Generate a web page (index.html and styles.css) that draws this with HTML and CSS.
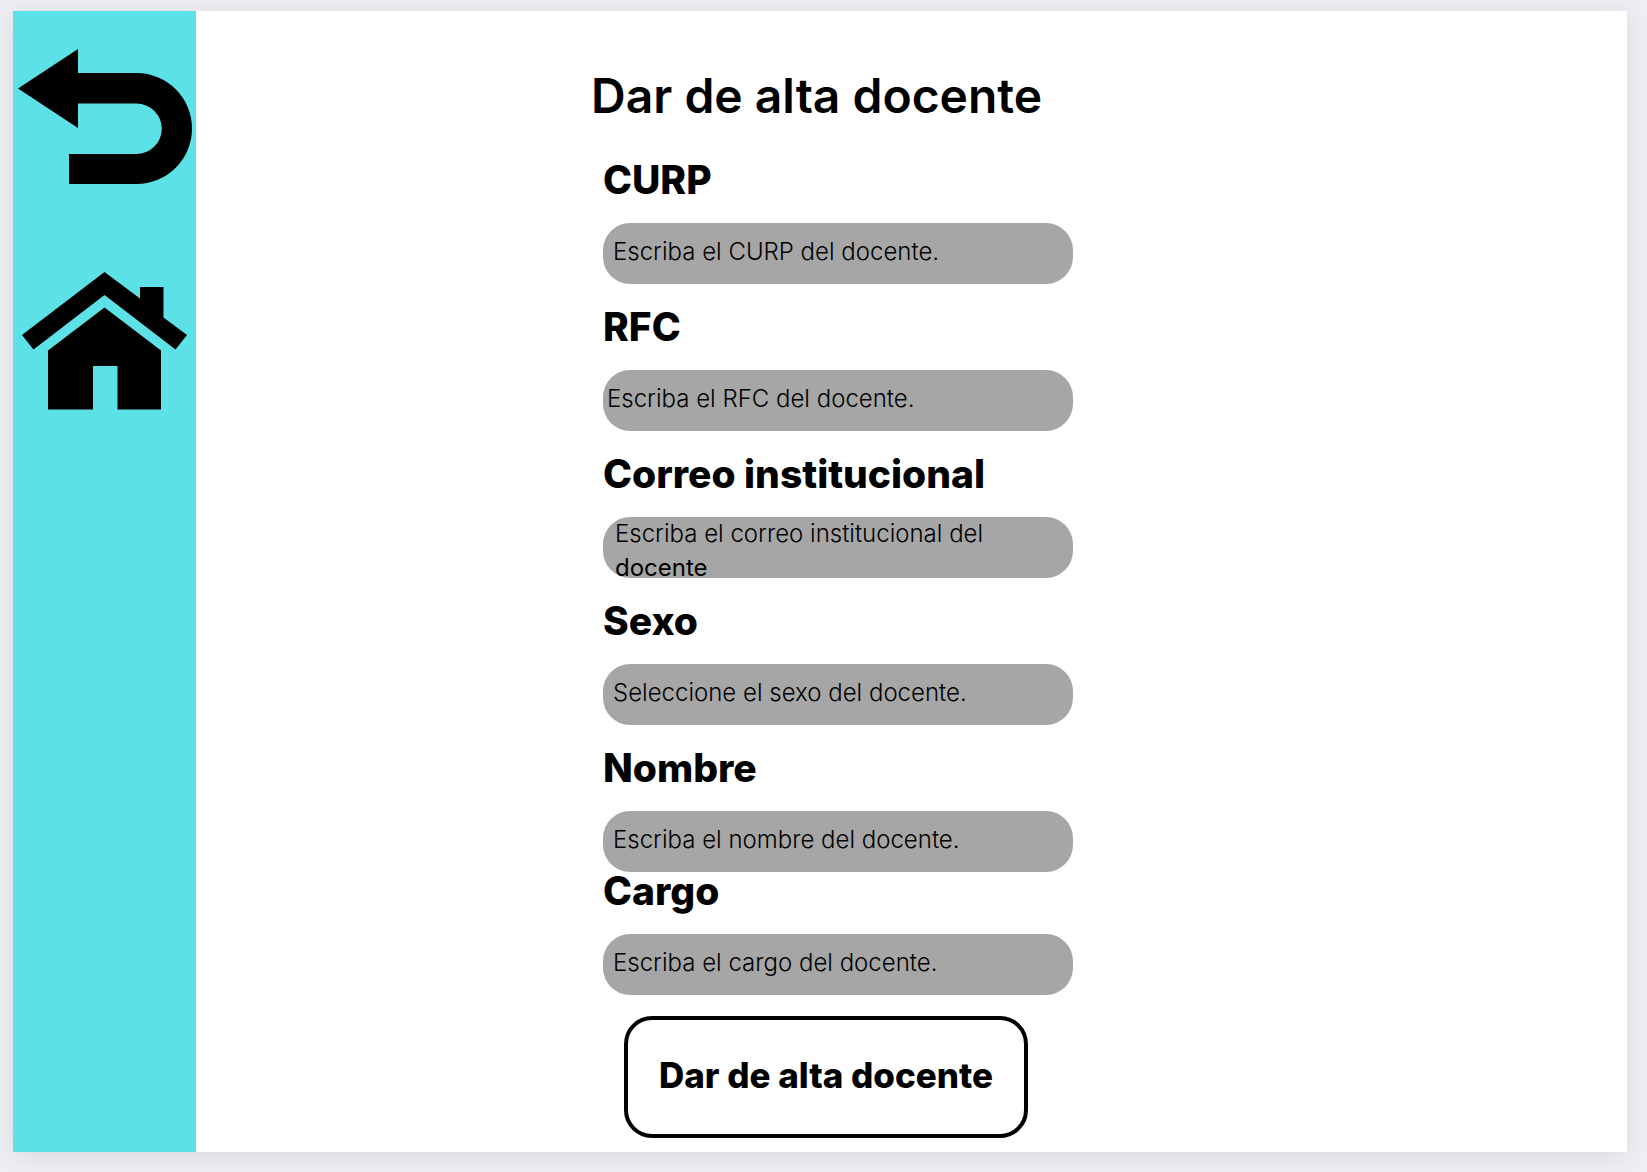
FILE: index.html
```html
<!DOCTYPE html>
<html lang="es">
<head>
<meta charset="utf-8">
<meta name="viewport" content="width=device-width, initial-scale=1">
<title>Dar de alta docente</title>
<link rel="stylesheet" href="styles.css">
</head>
<body>
<div class="sheet">
  <nav class="sidebar">
    <a href="#" aria-label="Regresar">
      <svg class="icon" width="174" height="136" viewBox="0 0 174 136"><path d="M0 39.500L60 0V24H118.500A55.500 55.500 0 0 1 118.500 135H51V105H118.500A25.250 25.250 0 0 0 118.500 54.500H60V79Z"/></svg>
    </a>
    <a href="#" aria-label="Inicio">
      <svg class="icon" width="165" height="138" viewBox="0 0 165 138"><path d="M82.500 0L118 26.500V15H141.500V45.500L165 63L153.500 77.500L82.500 23L11.500 77.500L0 63Z"/><path d="M82.500 35.500L139 78.500V137.500H95.500V94H71V137.500H26V78.500Z"/></svg>
    </a>
  </nav>
  <main class="main">
    <form class="form">
      <h1 class="title">Dar de alta docente</h1>
      <div class="fields">
        <div class="field">
          <label class="label" for="curp">CURP</label>
          <input class="control" id="curp" type="text" placeholder="Escriba el CURP del docente.">
        </div>
        <div class="field">
          <label class="label" for="rfc">RFC</label>
          <input class="control control-tight" id="rfc" type="text" placeholder="Escriba el RFC del docente.">
        </div>
        <div class="field">
          <label class="label" for="correo">Correo institucional</label>
          <div class="hinted">
            <textarea class="control" id="correo" aria-describedby="correo-hint"></textarea>
            <span class="hint" id="correo-hint">Escriba el correo institucional del <span class="hint-end">docente</span></span>
          </div>
        </div>
        <div class="field">
          <label class="label" for="sexo">Sexo</label>
          <select class="control" id="sexo">
            <option>Seleccione el sexo del docente.</option>
          </select>
        </div>
        <div class="field">
          <label class="label" for="nombre">Nombre</label>
          <input class="control" id="nombre" type="text" placeholder="Escriba el nombre del docente.">
        </div>
        <div class="field field-close">
          <label class="label" for="cargo">Cargo</label>
          <input class="control" id="cargo" type="text" placeholder="Escriba el cargo del docente.">
        </div>
      </div>
      <button class="submit" type="submit">Dar de alta docente</button>
    </form>
  </main>
</div>
</body>
</html>
```
FILE: styles.css
```css
* {
  box-sizing: border-box;
}

body {
  margin: 0;
  min-height: 100vh;
  padding: 11px 20px 20px 13px;
  display: flex;
  background: #eeeff4;
  color: #000;
  font-family: Inter, "Open Sans", sans-serif;
}

.sheet {
  flex: 1;
  display: flex;
  background: #fff;
  box-shadow: 0 4px 24px rgba(40, 44, 70, 0.1);
}

.sidebar {
  flex: none;
  width: 183px;
  padding-top: 38px;
  display: flex;
  flex-direction: column;
  align-items: center;
  gap: 87px;
  background: #5ce1e6;
}

.icon {
  display: block;
  fill: #000;
}

.main {
  flex: 1;
  display: grid;
  grid-template-columns: 395fr 482px 554fr;
  padding: 61px 0 14px;
}

.form {
  grid-column: 2;
}

.title {
  margin: 0 0 41px;
  font-size: 48px;
  font-weight: 600;
  line-height: 48px;
  white-space: nowrap;
}

.fields {
  display: flex;
  flex-direction: column;
  padding-left: 12px;
}

.field {
  display: flex;
  flex-direction: column;
  gap: 24px;
  margin-bottom: 24px;
}

.field:nth-last-child(2) {
  margin-bottom: 0;
}

.field-close {
  margin-bottom: 21px;
}

.label {
  font-size: 39px;
  font-weight: 800;
  line-height: 38px;
}

.control {
  display: block;
  width: 100%;
  height: 61px;
  margin: 0;
  padding: 0 10px 4px;
  border: 0;
  border-radius: 27px;
  background: #a6a6a6;
  color: #000;
  font: 300 24px/34px Inter, "Open Sans", sans-serif;
  appearance: none;
  resize: none;
}

.control::placeholder {
  color: #000;
  opacity: 1;
}

.control-tight {
  padding-left: 4px;
}

.hinted {
  position: relative;
}

.hint {
  position: absolute;
  inset: 0 48px auto 12px;
  font-size: 24px;
  font-weight: 300;
  line-height: 34px;
  pointer-events: none;
}

.hint-end {
  display: block;
  font-weight: 400;
}

.submit {
  display: block;
  width: 404px;
  height: 122px;
  margin-left: 33px;
  padding: 0 0 4px;
  border: 4px solid #000;
  border-radius: 28px;
  background: #fff;
  color: #000;
  font: 800 35px/40px Inter, "Open Sans", sans-serif;
  white-space: nowrap;
}
```
